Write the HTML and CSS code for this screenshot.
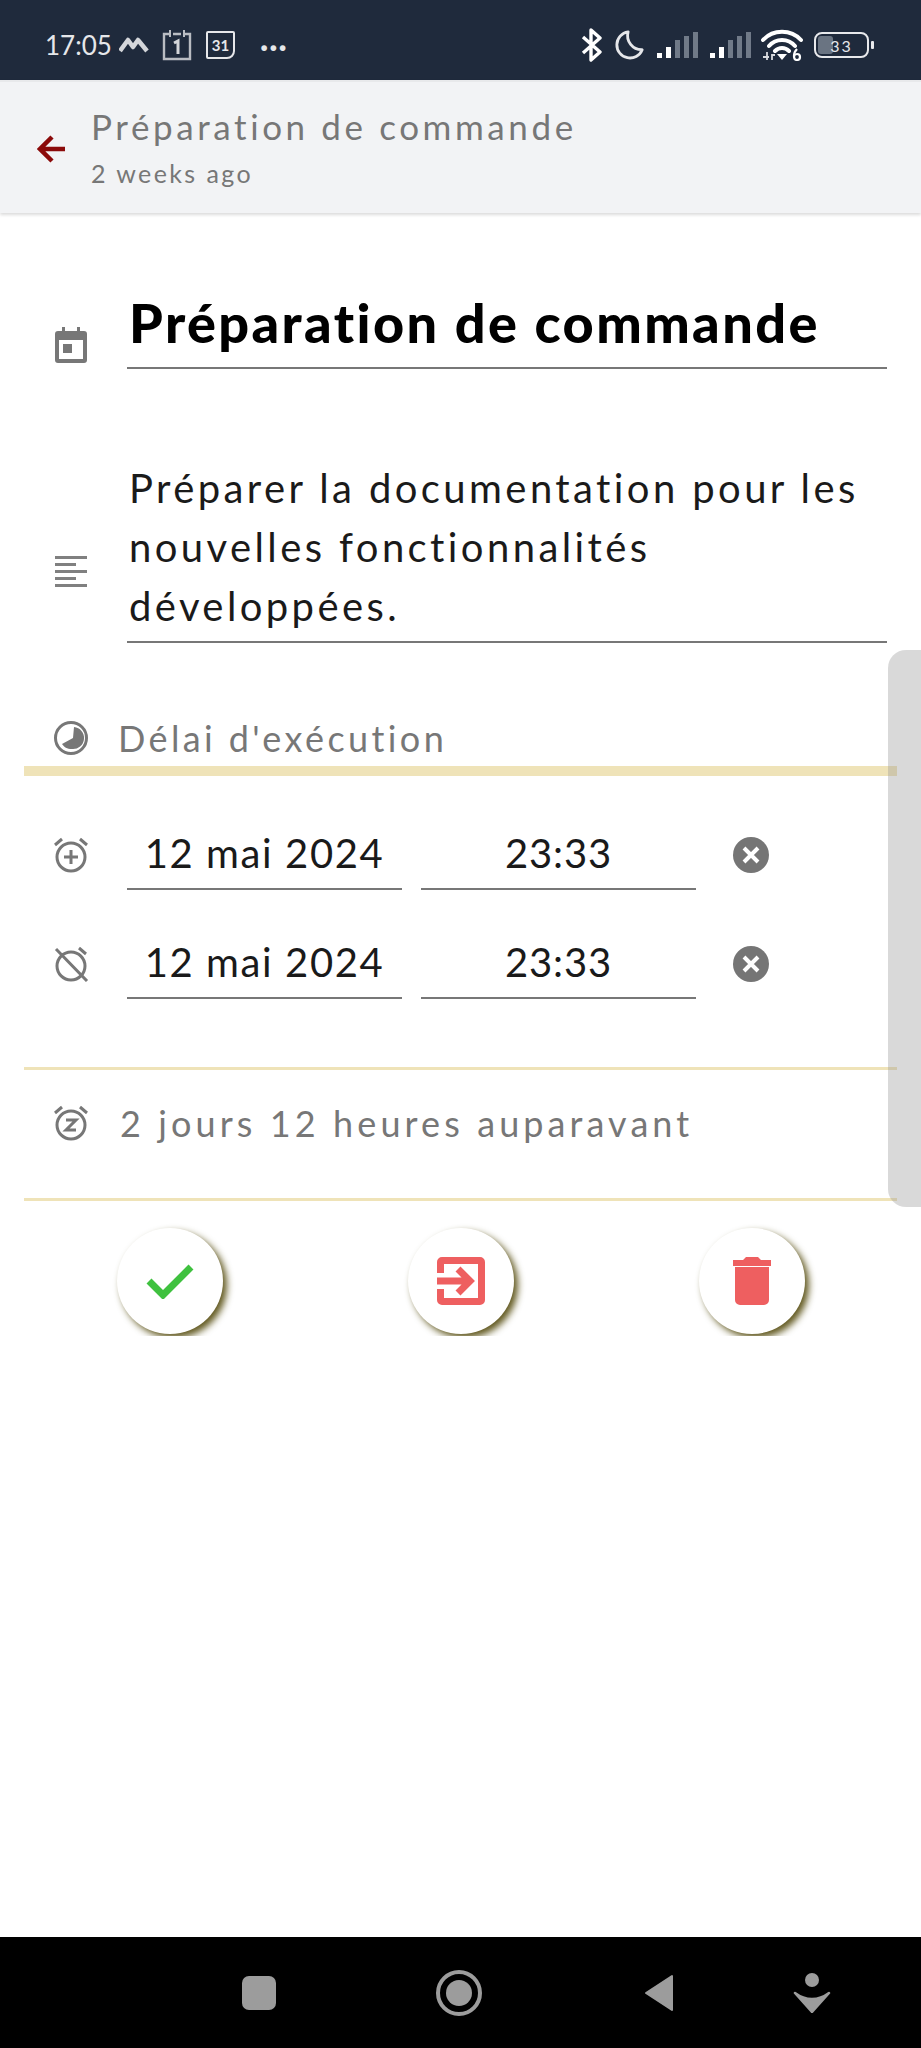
FILE: index.html
```html
<!DOCTYPE html>
<html lang="fr">
<head>
<meta charset="utf-8">
<title>Préparation de commande</title>
<link rel="stylesheet" href="styles.css">
</head>
<body>
<div class="screen">
  <header class="status">
    <div class="status-left">
      <span class="clock">17:05</span>
      <svg class="st-m" viewBox="0 0 30 16"><path d="M1 14 L9 3 L14 10 L19 3 L28 14" fill="none" stroke="#d4d6da" stroke-width="4.5" stroke-linejoin="round"/></svg>
      <svg class="st-cal" viewBox="0 0 32 32"><path d="M9 5H3V30H29V5H23M12 5H20" fill="none" stroke="#b9bcc2" stroke-width="2.4"/><path d="M9 1V8M23 1V8" stroke="#b9bcc2" stroke-width="2"/><path d="M13 14L17 12V25" fill="none" stroke="#d4d6da" stroke-width="3"/></svg>
      <span class="st-31">31</span>
      <span class="st-dots">···</span>
    </div>
    <div class="status-right">
      <svg class="st-bt" viewBox="0 0 24 34"><path d="M3 9L20 24L11 32V2L20 10L3 25" fill="none" stroke="#fff" stroke-width="3.4" stroke-linejoin="round"/></svg>
      <svg class="st-moon" viewBox="0 0 32 32"><path d="M14 2A14 14 0 1 0 29 21A15 15 0 0 1 14 2Z" fill="none" stroke="#e6e7ea" stroke-width="3" stroke-linejoin="round"/></svg>
      <svg class="st-sig" viewBox="0 0 42 28"><rect x="1" y="22" width="5" height="5" fill="#fff"/><rect x="10" y="16" width="5" height="11" fill="#fff"/><rect x="19" y="9" width="5" height="18" fill="#707a88"/><rect x="28" y="5" width="5" height="22" fill="#707a88"/><rect x="37" y="1" width="5" height="26" fill="#707a88"/></svg>
      <svg class="st-sig" viewBox="0 0 42 28"><rect x="1" y="22" width="5" height="5" fill="#fff"/><rect x="10" y="16" width="5" height="11" fill="#fff"/><rect x="19" y="9" width="5" height="18" fill="#707a88"/><rect x="28" y="5" width="5" height="22" fill="#707a88"/><rect x="37" y="1" width="5" height="26" fill="#707a88"/></svg>
      <svg class="st-wifi" viewBox="0 0 42 32"><path d="M2 11C12 0 30 0 40 11M8 17C15 9 27 9 34 17M14 22C18 18 24 18 28 22" fill="none" stroke="#fff" stroke-width="4" stroke-linecap="round"/><path d="M16 25H26L21 31Z" fill="#fff"/><path d="M36 20C32 24 32 31 36 31C40 31 40 25 36 25C34 25 33 27 33 28" fill="none" stroke="#fff" stroke-width="2.2"/><path d="M2 28H8M6 23V31M11 31V26H14" fill="none" stroke="#d8dade" stroke-width="1.8"/></svg>
      <div class="battery"><span class="battery-fill"></span><span class="battery-num">33</span></div>
      <span class="battery-tip"></span>
    </div>
  </header>

  <section class="appbar">
    <svg class="back" viewBox="0 0 30 30"><path d="M28 15H4M15 3L3 15L15 27" fill="none" stroke="#8b0a0a" stroke-width="4.5"/></svg>
    <div class="appbar-text">
      <div class="appbar-title">Préparation de commande</div>
      <div class="appbar-sub">2 weeks ago</div>
    </div>
  </section>

  <main class="content">
    <div class="field title-field">
      <svg class="icon icon-cal" viewBox="0 0 32 36"><path d="M7 0H10V4H22V0H25V4H29A3 3 0 0 1 32 7V33A3 3 0 0 1 29 36H3A3 3 0 0 1 0 33V7A3 3 0 0 1 3 4H7ZM4 13V32H28V13ZM8 17H17V26H8Z" fill="#777" fill-rule="evenodd"/></svg>
      <div class="line title-line">Préparation de commande</div>
    </div>
    <div class="field desc-field">
      <svg class="icon icon-lines" viewBox="0 0 32 32"><path d="M0 0H32V3H0ZM0 7H21V10H0ZM0 14H32V17H0ZM0 21H21V24H0ZM0 28H32V31H0Z" fill="#808080"/></svg>
      <div class="line desc-line">Préparer la documentation pour les nouvelles fonctionnalités développées.</div>
    </div>

    <div class="head-row">
      <svg class="icon icon-pie" viewBox="0 0 36 36"><circle cx="18" cy="18" r="15.5" fill="none" stroke="#777" stroke-width="3"/><path d="M21 7A11 11 0 0 1 19 29C14 29 11 27 9 24L20 18Z" fill="#777"/></svg>
      <span class="head-text">Délai d'exécution</span>
    </div>
    <div class="rule rule-thick"></div>

    <div class="dates">
      <div class="date-row">
        <svg class="icon icon-alarm" viewBox="0 0 36 36"><circle cx="18" cy="20" r="14" fill="none" stroke="#777" stroke-width="3"/><path d="M2 8L9 2M34 8L27 2" stroke="#777" stroke-width="3"/><path d="M18 13V27M11 20H25" stroke="#777" stroke-width="3"/></svg>
        <div class="cell cell-date">12 mai 2024</div>
        <div class="cell cell-time">23:33</div>
        <svg class="clear" viewBox="0 0 36 36"><circle cx="18" cy="18" r="18" fill="#757575"/><path d="M11 11L25 25M25 11L11 25" stroke="#fff" stroke-width="4"/></svg>
      </div>
      <div class="date-row">
        <svg class="icon icon-alarm" viewBox="0 0 36 36"><circle cx="18" cy="20" r="14" fill="none" stroke="#777" stroke-width="3"/><path d="M26 2L33 8M3 3L34 35" stroke="#777" stroke-width="3"/></svg>
        <div class="cell cell-date">12 mai 2024</div>
        <div class="cell cell-time">23:33</div>
        <svg class="clear" viewBox="0 0 36 36"><circle cx="18" cy="18" r="18" fill="#757575"/><path d="M11 11L25 25M25 11L11 25" stroke="#fff" stroke-width="4"/></svg>
      </div>
    </div>

    <div class="rule rule-thin"></div>
    <div class="snooze-row">
      <svg class="icon icon-alarm" viewBox="0 0 36 36"><circle cx="18" cy="20" r="14" fill="none" stroke="#777" stroke-width="3"/><path d="M2 8L9 2M34 8L27 2" stroke="#777" stroke-width="3"/><path d="M13 15H23L13 25H23" fill="none" stroke="#777" stroke-width="3"/></svg>
      <span class="snooze-text">2 jours 12 heures auparavant</span>
    </div>
    <div class="rule rule-thin-last"></div>

    <div class="actions">
      <button class="fab"><svg class="fab-check" viewBox="0 0 48 36"><path d="M3 18L17 32L45 4" fill="none" stroke="#3fc13f" stroke-width="7"/></svg></button>
      <button class="fab"><svg class="fab-exit" viewBox="0 0 48 48"><path d="M5 0H43A5 5 0 0 1 48 5V43A5 5 0 0 1 43 48H5A5 5 0 0 1 0 43V32H7V41H41V7H7V16H0V5A5 5 0 0 1 5 0Z" fill="#ee5f60"/><path d="M0 24H32M21 12L33 24L21 36" fill="none" stroke="#ee5f60" stroke-width="7"/></svg></button>
      <button class="fab"><svg class="fab-trash" viewBox="0 0 38 48"><path d="M13 0H25L28 3H38V9H0V3H10ZM2 10H36V43A5 5 0 0 1 31 48H7A5 5 0 0 1 2 43Z" fill="#ee5f60"/></svg></button>
    </div>
  </main>

  <div class="scrollbar"></div>

  <footer class="navbar">
    <span class="nav-square"></span>
    <span class="nav-home"><span class="nav-dot"></span></span>
    <svg class="nav-back" viewBox="0 0 30 38"><path d="M28 2V36L2 19Z" fill="#9c9c9c" stroke="#9c9c9c" stroke-width="2" stroke-linejoin="round"/></svg>
    <svg class="nav-person" viewBox="0 0 38 40"><ellipse cx="19" cy="7" rx="7" ry="7" fill="#9c9c9c"/><path d="M2 20Q10 26 19 26Q28 26 36 20L19 39Z" fill="#9c9c9c" stroke="#9c9c9c" stroke-width="2.5" stroke-linejoin="round"/></svg>
  </footer>
</div>
</body>
</html>
```

FILE: styles.css
```css
* { box-sizing: border-box; }
html, body { margin: 0; padding: 0; background: #fff; }
.screen {
  position: relative;
  width: 921px;
  height: 2048px;
  display: flex;
  flex-direction: column;
  overflow: hidden;
  font-family: "Lato", "Noto Sans", sans-serif;
  color: #1a1a1a;
}

/* status bar */
.status {
  height: 80px;
  flex: none;
  background: #1f2a3c;
  display: flex;
  align-items: center;
  justify-content: space-between;
  padding: 10px 47px 0 45px;
}
.status-left, .status-right { display: flex; align-items: center; }
.clock { font-size: 26px; color: #e6e7ea; width: 75px; }
.st-m { width: 30px; height: 16px; margin-left: -1px; }
.st-cal { width: 32px; height: 32px; margin-left: 12px; }
.st-31 {
  width: 29px; height: 28px; margin-left: 13px;
  border: 2px solid #e6e7ea; border-radius: 2px 2px 8px 2px;
  color: #e6e7ea; font-size: 15px; font-weight: 700; text-align: center; line-height: 24px;
}
.st-dots { color: #e6e7ea; font-size: 30px; font-weight: 700; line-height: 20px; margin-left: 25px; letter-spacing: 1px; }
.st-bt { width: 24px; height: 34px; }
.st-moon { width: 30px; height: 32px; margin-left: 11px; }
.st-sig { width: 42px; height: 28px; margin-left: 11px; }
.st-wifi { width: 42px; height: 32px; margin-left: 10px; }
.battery {
  position: relative;
  width: 55px; height: 26px; margin-left: 11px;
  border: 2.5px solid #e8e9ec; border-radius: 8px;
  display: flex; align-items: center; justify-content: center;
}
.battery-fill { position: absolute; left: 2px; top: 2px; bottom: 2px; width: 15px; background: #6a7482; border-radius: 3px; }
.battery-num { position: relative; color: #e6e7ea; font-size: 16px; letter-spacing: 2px; }
.battery-tip { width: 3px; height: 8px; background: #e8e9ec; margin-left: 2px; border-radius: 1px; }

/* app bar */
.appbar {
  height: 133px;
  flex: none;
  background: #f2f3f5;
  border-top: 2px solid #e8e9eb;
  box-shadow: 0 2px 3px rgba(0,0,0,.14);
  display: flex;
  align-items: center;
  padding-left: 37px;
}
.back { width: 30px; height: 30px; margin-top: 2px; }
.appbar-text { margin-left: 24px; margin-top: -1px; }
.appbar-title { font-size: 35px; line-height: 44px; color: #777; letter-spacing: 3.6px; white-space: nowrap; }
.appbar-sub { font-size: 25px; line-height: 34px; color: #777; letter-spacing: 2.4px; margin-top: 8px; }

/* content */
.content { flex: 1; padding: 0 24px; }
.field { display: flex; align-items: flex-end; }
.icon { flex: none; width: 36px; height: 36px; margin-left: 29px; }
.icon-cal { width: 32px; margin-left: 31px; margin-bottom: 6px; }
.icon-lines { width: 32px; height: 32px; margin-left: 31px; margin-bottom: 55px; }
.line { margin-left: 40px; flex: 1; border-bottom: 2px solid #777; margin-right: 10px; padding-left: 2px; }
.title-field { margin-top: 77px; }
.title-line { height: 79px; font-size: 54px; line-height: 66px; font-weight: 900; color: #000; letter-spacing: 2.4px; white-space: nowrap; }
.desc-field { margin-top: 90px; }
.desc-line { font-size: 40px; line-height: 59px; letter-spacing: 3.4px; padding-bottom: 5px; }

.head-row { display: flex; align-items: center; margin-top: 70px; height: 50px; }
.head-text { font-size: 36px; line-height: 44px; color: #777; letter-spacing: 3.4px; white-space: nowrap; margin-left: 29px; }
.rule { background: #efe3b8; height: 3px; }
.rule-thick { height: 10px; margin-top: 3px; }

.dates { padding-top: 29px; display: flex; flex-direction: column; gap: 24px; }
.date-row { display: flex; align-items: center; height: 85px; }
.date-row .icon { margin-top: 15px; }
.cell {
  flex: none;
  width: 275px;
  height: 85px;
  border-bottom: 2px solid #777;
  padding-top: 12px;
  font-size: 40px;
  line-height: 72px;
  text-align: center;
  white-space: nowrap;
}
.cell-date { margin-left: 38px; letter-spacing: 1.6px; }
.cell-time { margin-left: 19px; letter-spacing: .8px; }
.clear { width: 36px; height: 36px; margin-left: 37px; margin-top: 15px; }
.rule-thin { margin-top: 68px; }
.snooze-row { display: flex; align-items: center; height: 128px; padding-bottom: 22px; }
.snooze-text { font-size: 36px; line-height: 44px; color: #777; letter-spacing: 4.1px; white-space: nowrap; margin-left: 31px; }
.rule-thin-last { margin-top: 0; }

.actions {
  display: flex;
  height: 135px;
  overflow: hidden;
  padding-top: 27px;
  padding-left: 93px;
  gap: 185px;
}
.fab {
  flex: none;
  width: 106px;
  height: 106px;
  border: 0;
  padding: 0;
  border-radius: 50%;
  background: #fff;
  box-shadow: 4px 4px 7px rgba(90,80,20,.95);
  display: flex;
  align-items: center;
  justify-content: center;
}
.fab-check { width: 48px; height: 36px; }
.fab-exit { width: 48px; height: 48px; }
.fab-trash { width: 38px; height: 48px; }

/* overlay scrollbar */
.scrollbar {
  position: absolute;
  right: 0;
  top: 650px;
  width: 33px;
  height: 557px;
  background: rgba(150,150,150,.36);
  border-radius: 18px 0 0 18px;
}

/* nav bar */
.navbar {
  height: 111px;
  flex: none;
  background: #000;
  display: flex;
  align-items: center;
}
.nav-square { width: 34px; height: 34px; margin-left: 242px; border-radius: 7px; background: #9c9c9c; }
.nav-home { width: 46px; height: 46px; margin-left: 160px; border: 4px solid #9c9c9c; border-radius: 50%; display: flex; align-items: center; justify-content: center; }
.nav-dot { width: 26px; height: 26px; border-radius: 50%; background: #9c9c9c; }
.nav-back { width: 30px; height: 38px; margin-left: 162px; }
.nav-person { width: 38px; height: 40px; margin-left: 119px; }
```
